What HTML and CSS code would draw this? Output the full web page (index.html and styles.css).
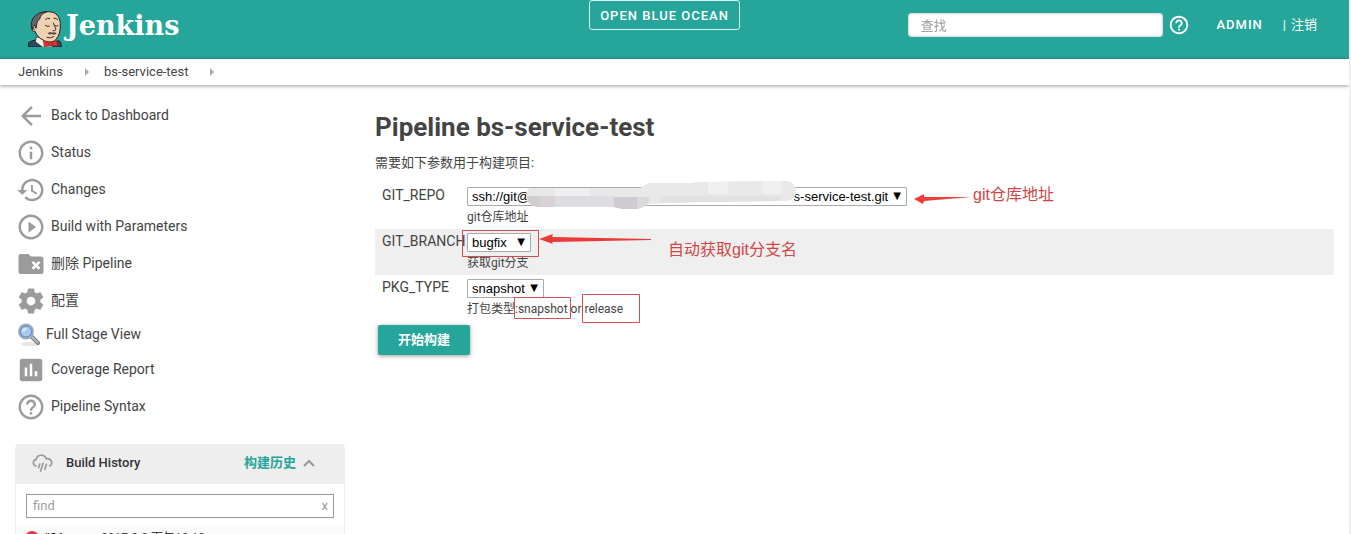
FILE: index.html
```html
<!DOCTYPE html>
<html lang="zh-CN">
<head>
<meta charset="utf-8">
<title>bs-service-test [Jenkins]</title>
<link rel="stylesheet" href="styles.css">
</head>
<body>
<div class="page">
  <header class="header">
    <a class="logo" href="#">
      <svg class="logo-face" viewBox="84 32 100 108" aria-hidden="true">
        <path d="M84 140 V128 Q92 122 104 119 L150 128 L176 121 Q184 126 183 140Z" fill="#304a63" stroke="#1d1f20" stroke-width="3"/>
        <path d="M108 110 L105 124 L126 140 H156 L160 118Z" fill="#f4f1ea" stroke="#1d1f20" stroke-width="2"/>
        <path d="M103 72 C102 46 122 34 144 34 C168 34 179 50 180 70 C181 92 176 108 166 118 C158 128 140 126 128 119 C115 113 108 103 105 94 C92 96 90 76 103 72Z" fill="#efd2b1" stroke="#1d1f20" stroke-width="3"/>
        <path d="M93 80 C90 58 105 34 140 34 C126 39 120 45 119 55 C109 60 110 70 107 84 L103 74 Q96 74 97 88Z" fill="#67656a" stroke="#29292b" stroke-width="3"/>
        <path d="M135 58 Q141 51 149 55 M160 54 Q168 52 173 59 M134 74 Q140 81 148 77 M163 75 Q168 80 174 75 M159 67 C161 78 169 84 165 90 Q160 93 157 90 M139 111 Q150 116 161 108 M101 79 Q96 85 104 90" fill="none" stroke="#332b27" stroke-width="3"/>
        <path d="M142 100 Q148 92 155 97 Q163 93 169 100 Q160 105 154 101 Q147 104 142 100Z" fill="#514740"/>
        <path d="M128 121 L149 127 L169 120 L171 138 L152 135 L132 140Z" fill="#e8302b" stroke="#7b1717" stroke-width="1"/>
        <circle cx="151" cy="131" r="5" fill="#f23f3a" stroke="#5b1717" stroke-width="2"/>
      </svg>
      <span class="logo-name">Jenkins</span>
    </a>
    <button class="ocean" type="button">OPEN BLUE OCEAN</button>
    <div class="tools">
      <input class="search" type="text" placeholder="查找" aria-label="查找">
      <a class="help" href="#" aria-label="Help"><svg viewBox="0 0 24 24"><path d="M11 18h2v-2h-2v2zm1-16C6.480 2 2 6.480 2 12s4.480 10 10 10 10-4.480 10-10S17.520 2 12 2zm0 18c-4.410 0-8-3.590-8-8s3.590-8 8-8 8 3.590 8 8-3.590 8-8 8zm0-14c-2.210 0-4 1.790-4 4h2c0-1.100.9-2 2-2s2 .9 2 2c0 2-3 1.750-3 5h2c0-2.250 3-2.500 3-5 0-2.210-1.790-4-4-4z"/></svg></a>
      <a class="user" href="#">ADMIN</a>
      <span class="logout">| <a href="#">注销</a></span>
    </div>
  </header>

  <nav class="crumbs" aria-label="Breadcrumb">
    <a href="#">Jenkins</a><i class="crumb-arrow"></i>
    <a href="#">bs-service-test</a><i class="crumb-arrow"></i>
  </nav>

  <div class="body">
    <aside class="side">
      <nav class="tasks">
        <a class="task" href="#"><svg viewBox="0 0 24 24"><path d="M20 11H7.830l5.590-5.590L12 4l-8 8 8 8 1.410-1.410L7.830 13H20v-2z"/></svg><span>Back to Dashboard</span></a>
        <a class="task" href="#"><svg viewBox="0 0 24 24"><path d="M11 17h2v-6h-2v6zm1-15C6.480 2 2 6.480 2 12s4.480 10 10 10 10-4.480 10-10S17.520 2 12 2zm0 18c-4.410 0-8-3.590-8-8s3.590-8 8-8 8 3.590 8 8-3.590 8-8 8zM11 9h2V7h-2v2z"/></svg><span>Status</span></a>
        <a class="task" href="#"><svg viewBox="0 0 24 24"><path d="M13 3c-4.970 0-9 4.030-9 9H1l3.890 3.890.07.14L9 12H6c0-3.870 3.130-7 7-7s7 3.130 7 7-3.130 7-7 7c-1.930 0-3.680-.79-4.940-2.060l-1.420 1.420C8.270 19.990 10.510 21 13 21c4.970 0 9-4.030 9-9s-4.030-9-9-9zm-1 5v5l4.280 2.540.72-1.210-3.500-2.080V8H12z"/></svg><span>Changes</span></a>
        <a class="task" href="#"><svg viewBox="0 0 24 24"><path d="M10 16.500l6-4.500-6-4.500v9zM12 2C6.480 2 2 6.480 2 12s4.480 10 10 10 10-4.480 10-10S17.520 2 12 2zm0 18c-4.410 0-8-3.590-8-8s3.590-8 8-8 8 3.590 8 8-3.590 8-8 8z"/></svg><span>Build with Parameters</span></a>
        <a class="task" href="#"><svg viewBox="0 0 24 24"><path fill-rule="evenodd" d="M10 4H4a2 2 0 0 0-2 2v12a2 2 0 0 0 2 2h16a2 2 0 0 0 2-2V8a2 2 0 0 0-2-2h-8zM14 9.500l2 2 2-2 1.500 1.500-2 2 2 2-1.500 1.500-2-2-2 2-1.500-1.500 2-2-2-2z"/></svg><span>删除 Pipeline</span></a>
        <a class="task" href="#"><svg viewBox="0 0 24 24"><path d="M19.430 12.980c.04-.32.07-.64.07-.98s-.03-.66-.07-.98l2.110-1.650c.19-.15.24-.42.12-.64l-2-3.460c-.12-.22-.39-.3-.61-.22l-2.490 1c-.52-.4-1.080-.73-1.690-.98l-.38-2.650C14.460 2.180 14.250 2 14 2h-4c-.25 0-.46.18-.49.42l-.38 2.650c-.61.25-1.170.59-1.690.98l-2.490-1c-.23-.09-.49 0-.61.22l-2 3.460c-.13.22-.07.49.12.64l2.110 1.650c-.04.32-.07.65-.07.98s.03.66.07.98l-2.110 1.650c-.19.15-.24.42-.12.64l2 3.460c.12.22.39.3.61.22l2.490-1c.52.4 1.080.73 1.690.98l.38 2.650c.03.24.24.42.49.42h4c.25 0 .46-.18.49-.42l.38-2.650c.61-.25 1.170-.59 1.690-.98l2.490 1c.23.09.49 0 .61-.22l2-3.460c.12-.22.07-.49-.12-.64l-2.110-1.650zM12 15.500c-1.930 0-3.500-1.570-3.500-3.500s1.570-3.500 3.500-3.500 3.500 1.570 3.500 3.500-1.570 3.500-3.500 3.500z"/></svg><span>配置</span></a>
        <a class="task task-stage" href="#"><svg viewBox="0 0 24 24"><ellipse cx="13" cy="21" rx="9" ry="2" fill="#e6e6e6"/><path d="M14 13l7 7" stroke="#777" stroke-width="4" stroke-linecap="round"/><path d="M15 14l5.500 5.500" stroke="#bbb" stroke-width="2" stroke-linecap="round"/><circle cx="9" cy="8.500" r="7" fill="#8fb8e8" stroke="#a3aab3" stroke-width="2"/><circle cx="9" cy="8.500" r="5.500" fill="#a9caef" stroke="#5c87bd"/><path d="M5 9Q5 5 10 5Q9 8 5 9Z" fill="#dceafa"/></svg><span>Full Stage View</span></a>
        <a class="task" href="#"><svg viewBox="0 0 24 24"><path d="M19 3H5c-1.100 0-2 .9-2 2v14c0 1.100.9 2 2 2h14c1.100 0 2-.9 2-2V5c0-1.100-.9-2-2-2zM9 17H7v-7h2v7zm4 0h-2V7h2v10zm4 0h-2v-4h2v4z"/></svg><span>Coverage Report</span></a>
        <a class="task" href="#"><svg viewBox="0 0 24 24"><path d="M11 18h2v-2h-2v2zm1-16C6.480 2 2 6.480 2 12s4.480 10 10 10 10-4.480 10-10S17.520 2 12 2zm0 18c-4.410 0-8-3.590-8-8s3.590-8 8-8 8 3.590 8 8-3.590 8-8 8zm0-14c-2.210 0-4 1.790-4 4h2c0-1.100.9-2 2-2s2 .9 2 2c0 2-3 1.750-3 5h2c0-2.250 3-2.500 3-5 0-2.210-1.790-4-4-4z"/></svg><span>Pipeline Syntax</span></a>
      </nav>

      <section class="history">
        <div class="history-head">
          <svg class="weather" viewBox="94 73 64 57" aria-hidden="true"><path d="M106 109C96 107 95 91 107 89C109 73 133 72 137 87C153 85 160 103 148 109M118 103l-4 11M128 101l-8 24M138 104l-5 15" fill="none" stroke="#999" stroke-width="5" stroke-linecap="round"/></svg>
          <h2 class="history-title">Build History</h2>
          <a class="trend" href="#">构建历史</a>
          <svg class="chevron" viewBox="0 0 12 8" aria-hidden="true"><path d="M1 7l5-5 5 5" fill="none" stroke="#999" stroke-width="2"/></svg>
        </div>
        <div class="finder">
          <input class="find" type="text" placeholder="find" aria-label="find">
          <button class="clear" type="button">x</button>
        </div>
        <div class="build"><span class="ball"></span><a class="build-no" href="#">#31</a><a class="build-time" href="#">2017-8-8 下午10:10</a></div>
      </section>
    </aside>

    <main class="main">
      <h1 class="title">Pipeline bs-service-test</h1>
      <p class="intro">需要如下参数用于构建项目:</p>
      <form class="params">
        <div class="param">
          <label class="param-name" for="repo">GIT_REPO</label>
          <div class="param-value">
            <span class="pick pick-repo"><select id="repo"><option>ssh://git@&emsp;&emsp;&emsp;&emsp;&emsp;&emsp;&emsp;&emsp;&emsp;&emsp;&emsp;&emsp;&emsp;&emsp;&emsp;&emsp;&emsp;&emsp;&emsp;&emsp; s-service-test.git</option></select></span>
            <div class="hint">git仓库地址</div>
          </div>
        </div>
        <div class="param param-alt">
          <label class="param-name" for="branch">GIT_BRANCH</label>
          <div class="param-value">
            <span class="pick pick-branch"><select id="branch"><option>bugfix</option></select></span>
            <div class="hint">获取git分支</div>
          </div>
        </div>
        <div class="param">
          <label class="param-name" for="pkg">PKG_TYPE</label>
          <div class="param-value">
            <span class="pick pick-type"><select id="pkg"><option>snapshot</option><option>release</option></select></span>
            <div class="hint">打包类型:snapshot or release</div>
          </div>
        </div>
        <button class="submit" type="button">开始构建</button>
      </form>

      <svg class="notes" viewBox="375 85 700 260">
        <path d="M530 188H590V188H640L648 183L690 183L700 182L760 181H786Q796 182 796 191Q796 201 786 201L700 202L648 204Q644 207 636 209H622L612 207H536Q527 204 526 198Q526 189 530 188Z" fill="#e8e8e8"/>
        <path d="M527 196H540V207H536Q527 204 527 196Z" fill="#cfcdcf"/>
        <path d="M540 196h15v11h-15z" fill="#d8d2d6"/>
        <path d="M555 196h15v11h-15zM570 196h45v11h-45z" fill="#dddce0"/>
        <path d="M555 188h35v8h-35zM708 182h20v12h-20zM762 181h20v13h-20z" fill="#efefef"/>
        <path d="M660 196h120v5l-80 1-40 1z" fill="#e1e1e2"/>
        <path d="M614 197h23v12h-15l-8-2z" fill="#d0cbd3"/>
        <path d="M637 197h12v5q-4 6-12 7z" fill="#d9d8db"/>
        <path d="M914 199L924 194L924 197L971 197L924 201L923 204Z" fill="#f23c38"/>
        <path d="M539 239L553 234L552 237L651 239L651 240L552 242L553 244Z" fill="#e93a37"/>
        <g fill="none" stroke="#cd5050"><path d="M462.500 230.500h76v26h-76zM514.500 297.500h56v21h-56zM582.500 294.500h57v28h-57z"/></g>
        <text x="973" y="200">git仓库地址</text>
        <text x="668" y="255">自动获取git分支名</text>
      </svg>
    </main>
  </div>
</div>
</body>
</html>
```
FILE: styles.css
```css
* { box-sizing: border-box; }
body {
  margin: 0;
  background: #fff;
  color: #444;
  font: 14px/20px Roboto, "Noto Sans CJK SC", sans-serif;
}
a { color: inherit; text-decoration: none; }
button, input, select { font: inherit; margin: 0; }
.page {
  height: 100vh;
  overflow: hidden;
  border-right: 2px solid #f0f0f0;
}

.header {
  display: grid;
  grid-template-columns: 1fr auto 1fr;
  align-items: start;
  height: 59px;
  padding-right: 20px;
  background: #26a69a;
  border-bottom: 1px solid #35938a;
  color: #fff;
}
.logo { display: flex; gap: 4px; padding: 11px 0 0 28px; }
.logo-face { width: 34px; height: 36px; }
.logo-name { font: bold 27px/30px "DejaVu Serif", serif; }
.ocean {
  height: 30px;
  padding: 2px 10px 0;
  border: 1px solid #d9f3ef;
  border-radius: 3px;
  background: none;
  color: #fff;
  font-size: 13px;
  font-weight: 500;
  letter-spacing: 1px;
}
.tools {
  display: flex;
  align-items: center;
  justify-content: flex-end;
  padding: 13px 12px 0 0;
}
.search {
  width: 255px;
  height: 24px;
  padding: 0 12px;
  border: 0;
  border-radius: 4px;
  background: #fff;
  box-shadow: inset 0 0 3px #aaa;
  font-size: 13px;
}
::placeholder { color: #a0a0a0; opacity: 1; }
.help { display: flex; margin-left: 5px; }
.help svg { width: 22px; height: 22px; fill: #fff; }
.user { margin-left: 26px; font-size: 13px; font-weight: 500; letter-spacing: 1px; }
.logout { display: flex; gap: 5px; margin-left: 20px; font-size: 13px; }

.crumbs {
  position: relative;
  display: flex;
  align-items: center;
  height: 26px;
  padding-left: 18px;
  background: #fff;
  box-shadow: 0 1px 4px rgba(0, 0, 0, .4);
  font-size: 13px;
}
.crumb-arrow {
  margin: 0 15px 0 22px;
  border: solid transparent;
  border-width: 4px 0 4px 4px;
  border-left-color: #aaa;
}

.body { display: grid; grid-template-columns: 375px 1fr; }
.side { padding: 11px 30px 0 15px; }
.task { display: flex; align-items: center; gap: 5px; height: 37px; padding-left: 1px; }
.task svg { flex: none; width: 30px; height: 30px; margin-top: 2px; fill: #9b9b9b; }
.task-stage { height: 32px; padding-left: 2px; }
.task-stage svg { width: 24px; height: 24px; }

.history { margin-top: 20px; border: 1px solid #eee; border-radius: 4px 4px 0 0; }
.history-head {
  display: flex;
  align-items: center;
  height: 39px;
  padding: 0 29px 3px 16px;
  background: #eee;
  font-size: 13px;
}
.weather { width: 21px; height: 19px; }
.history-title { margin: 0 auto 0 13px; font-size: 13px; font-weight: 500; line-height: 20px; color: #333; }
.trend { color: #26a69a; font-weight: bold; }
.chevron { width: 12px; height: 8px; margin-left: 7px; }
.finder {
  display: flex;
  height: 24px;
  margin: 10px 10px 8px;
  border: 1px solid #999;
}
.find { flex: 1; min-width: 0; padding: 0 6px; border: 0; font-size: 13px; }
.clear { padding: 0 5px; border: 0; background: none; color: #999; font-size: 13px; }
.build {
  display: flex;
  align-items: center;
  height: 24px;
  padding-left: 9px;
  background: #fafafa;
  font-size: 12px;
}
.ball { width: 14px; height: 14px; border-radius: 50%; background: #e53935; }
.build-no { width: 58px; margin-left: 4px; font-weight: bold; color: #111; }

.main { position: relative; padding: 26px 15px 0 0; }
.title { margin: 0 0 10px; font-size: 26px; line-height: 32px; font-weight: bold; }
.intro { margin: 0 0 10px; font-size: 13px; }
.param { display: grid; grid-template-columns: 92px 1fr; height: 46px; }
.param-alt { background: #efefef; }
.param-name { padding: 2px 0 0 7px; }
.param-value { padding-top: 4px; }
.pick { position: relative; display: flex; height: 19px; color: #000; }
.pick select {
  width: 100%;
  padding: 0 4px;
  border: 1px solid #a9a9a9;
  border-radius: 1px;
  appearance: none;
  background: #fff;
  color: #000;
  font: 13px/16px "Liberation Sans", sans-serif;
}
.pick::after {
  content: "▼";
  position: absolute;
  right: 6px;
  top: 0;
  font: 10px/17px "DejaVu Sans", sans-serif;
  pointer-events: none;
}
.pick-repo { width: 440px; }
.pick-branch { width: 64px; }
.pick-type { width: 77px; }
.hint { padding-top: 1px; font-size: 12px; }
.submit {
  display: block;
  height: 30px;
  margin: 4px 0 0 3px;
  padding: 0 20px;
  border: 0;
  border-radius: 2px;
  background: #26a69a;
  box-shadow: 0 1px 4px rgba(0, 0, 0, .4);
  color: #fff;
  font-size: 13px;
  font-weight: bold;
}
.notes {
  position: absolute;
  left: 0;
  top: 0;
  width: 700px;
  height: 260px;
  pointer-events: none;
  fill: #cf4646;
  font: 16px "Liberation Sans", "Noto Sans CJK SC", sans-serif;
}
```
